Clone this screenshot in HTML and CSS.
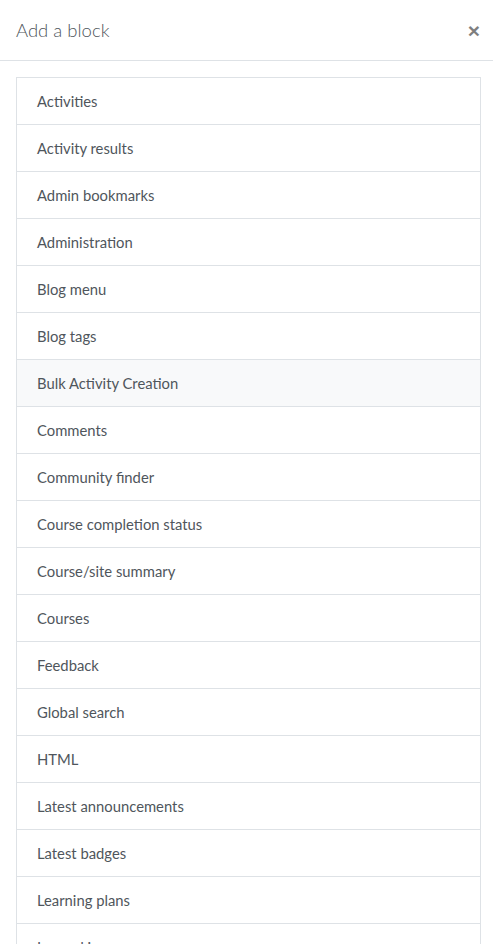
FILE: index.html
```html
<!DOCTYPE html>
<html lang="en">
  <head>
    <meta charset="UTF-8">
    <meta name="viewport" content="width=device-width, initial-scale=1.0">
    <link rel="stylesheet" href="styles.css">
    <title>Add a block</title>
  </head>
  <body>
    <div class="modal">
      <div class="modal-header">
        <h5 class="modal-title">Add a block</h5>
        <button class="close" aria-label="Close">&times;</button>
      </div>
      <div class="modal-body">
        <div class="list-group">
          <a href="#" class="list-group-item">Activities</a>
          <a href="#" class="list-group-item">Activity results</a>
          <a href="#" class="list-group-item">Admin bookmarks</a>
          <a href="#" class="list-group-item">Administration</a>
          <a href="#" class="list-group-item">Blog menu</a>
          <a href="#" class="list-group-item">Blog tags</a>
          <a href="#" class="list-group-item hover">Bulk Activity Creation</a>
          <a href="#" class="list-group-item">Comments</a>
          <a href="#" class="list-group-item">Community finder</a>
          <a href="#" class="list-group-item">Course completion status</a>
          <a href="#" class="list-group-item">Course/site summary</a>
          <a href="#" class="list-group-item">Courses</a>
          <a href="#" class="list-group-item">Feedback</a>
          <a href="#" class="list-group-item">Global search</a>
          <a href="#" class="list-group-item">HTML</a>
          <a href="#" class="list-group-item">Latest announcements</a>
          <a href="#" class="list-group-item">Latest badges</a>
          <a href="#" class="list-group-item">Learning plans</a>
          <a href="#" class="list-group-item">Logged in user</a>
        </div>
      </div>
    </div>
  </body>
</html>
```

FILE: styles.css
```css
:root {
--text: #4f565c;
--border: #dee2e6;
--hover: #f8f9fa;
}
* {
margin: 0;
padding: 0;
box-sizing: border-box;
}
html,
body {
width: 100%;
height: 100%;
overflow: hidden;
}
body {
background-color: #fff;
font-family: Lato, "Liberation Sans", sans-serif;
color: var(--text);
}
.modal {
width: 100%;
}
.modal-header {
display: flex;
align-items: center;
justify-content: space-between;
padding: 16px;
border-bottom: 1px solid var(--border);
height: 61px;
}
.modal-title {
font-size: 18.5px;
font-weight: 300;
line-height: 28px;
color: var(--text);
}
.close {
background: none;
border: none;
font-family: "Liberation Sans", sans-serif;
font-size: 21px;
font-weight: 700;
line-height: 1;
color: #000;
opacity: 0.5;
margin-right: -3px;
cursor: pointer;
}
.modal-body {
padding: 16px 12px 16px 16px;
}
.list-group {
display: flex;
flex-direction: column;
}
.list-group-item {
display: block;
padding: 12px 20px;
font-size: 14.8px;
line-height: 22px;
color: var(--text);
text-decoration: none;
border: 1px solid var(--border);
margin-bottom: -1px;
background-color: #fff;
}
.list-group-item.hover,
.list-group-item:hover {
background-color: var(--hover);
}
```
